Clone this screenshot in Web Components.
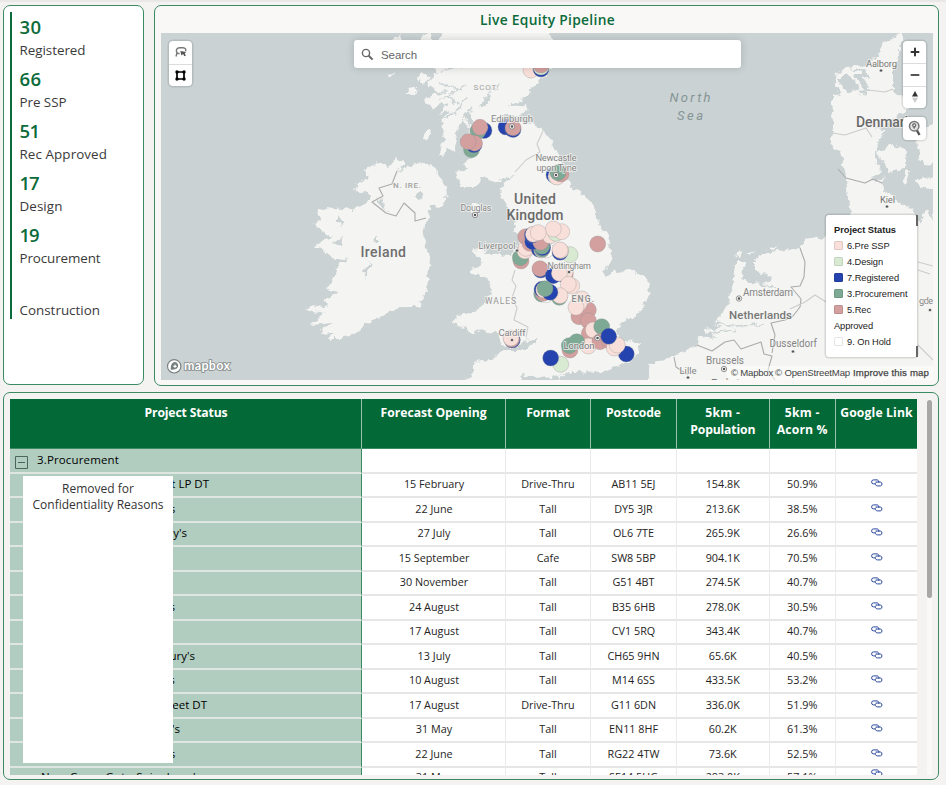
<!DOCTYPE html>
<html lang="en">
<head>
<meta charset="utf-8">
<title>Live Equity Pipeline</title>
<style>
html,body{margin:0;height:100%}
body{background:#f4f3f2;font-family:"Open Sans","Noto Sans",sans-serif;color:#252423;overflow:hidden}
</style>
</head>
<body>
<equity-dashboard></equity-dashboard>
<script>
/* Spreads or tightens letters so that each marked text takes the width in data-w. */
function fitTexts(root){
  root.querySelectorAll('[data-w]').forEach(e=>{
    const w=e.getBoundingClientRect().width,n=e.textContent.length;
    if(w&&n)e.style.letterSpacing=((+e.dataset.w-w)/n).toFixed(3)+'px';
  });
}

customElements.define('panel-card',class extends HTMLElement{
  constructor(){super();this.attachShadow({mode:'open'}).innerHTML=`
<style>:host{display:block;box-sizing:border-box;border:1px solid #3c8a62;border-radius:7px;background:var(--panel,#fff);overflow:hidden;min-width:0}</style><slot></slot>`}
});

customElements.define('stat-item',class extends HTMLElement{
  connectedCallback(){
    const r=this.attachShadow({mode:'open'});
    r.innerHTML=`<style>
:host{display:flex;flex-direction:column;height:52px;padding-left:7.5px;white-space:nowrap}
b{font-size:18.5px;line-height:30px;height:30px;font-weight:600;color:#0b6b3a}
span{font-size:13.4px;line-height:17px;color:#3a3a3a}
b,span{align-self:flex-start}
</style><b ${this.getAttribute('value')?`data-w="${this.getAttribute('vw')}"`:''}>${this.getAttribute('value')||''}</b><span data-w="${this.getAttribute('w')}">${this.getAttribute('label')}</span>`;
    fitTexts(r);
  }
});
customElements.define('stat-list',class extends HTMLElement{
  constructor(){super();this.attachShadow({mode:'open'}).innerHTML=`
<style>:host{display:block;box-sizing:border-box;margin:6px 6px 0;border-left:2px solid #0b6b3a;height:307px}</style><slot></slot>`}
});

customElements.define('map-button',class extends HTMLElement{
  constructor(){super();this.attachShadow({mode:'open'}).innerHTML=`
<style>:host{display:grid;place-items:center;width:23px;height:var(--h,22.5px);box-sizing:border-box}
:host(:not(:first-child)){border-top:1px solid #ddd}::slotted(svg){display:block}</style><slot></slot>`}
});
customElements.define('map-control',class extends HTMLElement{
  constructor(){super();this.attachShadow({mode:'open'}).innerHTML=`
<style>:host{position:absolute;background:#fff;border-radius:4px;box-shadow:0 0 0 1.5px rgba(0,0,0,.1)}</style><slot></slot>`}
});

customElements.define('map-legend',class extends HTMLElement{
  constructor(){super();
    const rows=[['#f9dfda','6.Pre SSP',42.5],['#d9ead3','4.Design',36],['#2443ae','7.Registered',52],['#7eaa95','3.Procurement',60.5],['#d3a09f','5.Rec',24],['','Approved',39],['#fff','9. On Hold',44]];
    this.attachShadow({mode:'open'}).innerHTML=`
<style>:host{position:absolute;left:665px;top:182px;width:91px;height:142px;box-sizing:border-box;padding:6.5px 8px;background:#fff;border-radius:3px;box-shadow:0 0 0 1.5px rgba(0,0,0,.12);font:9.3px "Liberation Sans",Arial,sans-serif;color:#222;white-space:nowrap}
div{display:flex;align-items:center;height:16px}
i{width:9px;height:9px;margin-right:4px;box-sizing:border-box;border:1px solid rgba(0,0,0,.1);border-radius:1.5px}
.a,.z{position:absolute;left:90px;width:2px;height:11px;background:#666}.a{top:0}.z{bottom:0}
</style><div><b data-w="62">Project Status</b></div>${rows.map(r=>`<div>${r[0]?`<i style="background:${r[0]}"></i>`:''}<span data-w="${r[2]}">${r[1]}</span></div>`).join('')}<span class="a"></span><span class="z"></span>`}
  connectedCallback(){fitTexts(this.shadowRoot)}
});

customElements.define('pipeline-map',class extends HTMLElement{
  constructor(){super();
    const C={p:'#f9dfda',r:'#d3a09f',b:'#2443ae',g:'#7eaa95',l:'#d9ead3',w:'#fff'};
    /* site markers in drawing order: colour key, x, y */
    const dots=`p531,70 b541,69 l541,67 r541,65 b484,130.5 g478,131 r480,127.3 g471.5,149.5 b474,144.8 r474.5,143.2 r468.2,141.7
b506,127 b513,129.5 r513,127.8 b554,175 w556,176.5 p557,177 r561,174 g558,172.7`.split(/\s+/).map(s=>[s[0],...s.slice(1).split(',').map(Number)]);
    const dense=`r303,213 g301,203 p315,183 p318,175 r317,140 r330,160 w378,180 b358,178 p365,180 g366,178 b368,173 g366,169 b338,155 r362,157 p390,137 l408,130 p425,125 p400,117 b337,135 p340,133 p355,128 r533,162 l450,194 b420,187 p422,182 p420,180 b362,240 r360,236 b400,257 r436,252 b428,252 p435,247 p418,250 p455,288 p445,283 g365,312 w378,314 r370,310 g418,322 p420,317 b366,298 p371,300 b390,307 g375,296 r477,380 r505,360 r505,392 p486,327 p478,340 p468,352 r508,430 p520,420 g545,410 p505,468 r540,455 r568,452 b619,492 p583,474 p592,465 b566,439 r450,480 g448,467 g470,455 l422,523 b392,504 b277,450 r275,448 p273,444`.split(/\s+/).map(s=>{const [x,y]=s.slice(1).split(',').map(Number);return[s[0],420+x/3,190+y/3]});
    const circ=a=>a.map(d=>`<circle cx="${d[1].toFixed(1)}" cy="${d[2].toFixed(1)}" r="8" fill="${C[d[0]]}"/>`).join('');
    /* place labels: text, left, baseline, width, size, weight, colour */
    const labels=[['Edinburgh',491,122,42,9.5,400,'#8b8b8b'],['Newcastle',535.5,160.5,41,9.5,400,'#858585'],['upon Tyne',536.5,171,40,9.5,400,'#858585'],['SCOT.',473.5,89.5,25,8,400,'#a2a2a2'],['N. IRE.',393,188,28,8,500,'#a2a2a2'],['Douglas',460.5,211,31,9,400,'#858585'],['Liverpool',478.5,248.5,37,9,400,'#858585'],['Nottingham',547.5,268.5,43.5,9,400,'#858585'],['WALES',485,304,31,8.5,400,'#999'],['ENG.',571.5,301.5,22.5,8.5,500,'#8a8a8a'],['Cardiff',498.5,335.5,27,9.5,400,'#858585'],['London',563.5,348.5,31,9.5,400,'#777'],['Ireland',360.5,256.5,45.5,14,500,'#6e6e6e'],['United',514,204,42,14,500,'#6a6a6a'],['Kingdom',506.5,220,57,14,500,'#6a6a6a'],['Aalborg',866,66.5,31,9.5,400,'#777'],['Denmark',856,127,56,14,500,'#6a6a6a'],['Kiel',880,203,15,9.5,400,'#777'],['Amsterdam',743,296,50,10,400,'#858585'],['Netherlands',729,318.5,63,11.5,500,'#777'],['Dusseldorf',769.5,347,47.5,10,400,'#858585'],['Brussels',706,363.5,38,10,400,'#858585'],['Lille',679.5,374,17,9.5,400,'#858585'],['gde',919,303.5,14,9.5,400,'#858585'],['Belgium',711,387.5,46,12,500,'#777']];
    this.attachShadow({mode:'open'}).innerHTML=`
<style>
:host{display:block;position:relative;width:772px;height:347px;overflow:hidden;background:#cad2d3}
.base{display:block}
.base text{font-family:Roboto,"Open Sans",sans-serif;paint-order:stroke;stroke:#f4f4f2;stroke-opacity:.75;stroke-width:1.8px;stroke-linejoin:round}
.base .sea{font-style:italic;stroke:none}
.search{position:absolute;left:193px;top:7px;width:387px;height:28px;box-sizing:border-box;padding:0 7px;background:#fff;border-radius:3px;box-shadow:0 0 7px 1px rgba(0,0,0,.13);display:flex;align-items:center;gap:7px;font:11.5px "Liberation Sans",Arial,sans-serif;color:#666}
.search span{padding-top:2px}
.attr{position:absolute;right:0;bottom:0;height:14px;box-sizing:border-box;width:206px;padding:0 4px;display:flex;gap:2px;background:rgba(255,255,255,.5);font:9.6px/14px "Liberation Sans",Arial,sans-serif;color:#444;white-space:nowrap}
.attr :last-child{margin-left:auto;-webkit-text-stroke:.25px #444}
.logo{position:absolute;left:5px;bottom:5px;display:flex;align-items:center}
</style>
<svg class="base" width="772" height="347" viewBox="161 33 772 347">
<defs><filter id="rough" x="161" y="33" width="772" height="347" filterUnits="userSpaceOnUse"><feTurbulence type="fractalNoise" baseFrequency=".16" numOctaves="3" seed="4"/><feDisplacementMap in="SourceGraphic" scale="8" xChannelSelector="R" yChannelSelector="G"/></filter></defs>
<g filter="url(#rough)"><g fill="#f4f4f2">
<path d="M440 20L545 20L552 40L556 52L551 68L543 78L532 88L527 97L512 103L510 106L527 105L528 110L520 115L505 116L495 118L503 122L520 122L533 124L544 131L553 143L557 155L567 173L570 185L585 196L595 207L598 223L607 235L611 252L610 265L603 270L605 276L613 272L633 271L648 280L650 293L642 310L633 318L623 322L614 332L625 340L642 344L638 353L628 363L613 367L603 373L570 372L553 377L533 378L523 374L517 390L460 390L466 378L474 371L474 362L490 360L503 350L528 350L538 337L527 341L517 348L503 345L497 333L487 332L480 330L470 333L463 327L452 322L457 317L473 313L487 303L492 290L488 277L477 276L470 272L478 265L483 260L472 253L487 253L510 255L517 250L520 240L515 230L517 220L510 210L503 200L501 192L504 182L518 174L493 183L485 175L475 187L460 187L456 173L467 170L463 163L472 157L470 147L462 137L471 130L463 120L458 124L457 133L452 143L447 150L443 157L439 155L443 140L444 127L440 120L450 110L440 113L448 103L433 107L423 100L438 93L427 83L437 73L432 66L440 55Z"/>
<path d="M355 190L358 183L368 178L365 168L378 163L388 167L397 157L405 163L397 172L415 163L433 165L437 173L446 187L447 197L440 207L430 205L428 217L423 233L430 257L427 290L422 300L420 307L402 307L388 313L368 323L355 333L338 339L327 339L335 332L318 333L332 323L310 325L325 313L307 310L310 305L327 307L323 300L340 292L324 289L333 282L338 265L349 260L332 257L316 245L332 238L318 227L313 223L322 220L317 212L325 207L352 210L368 202L372 195Z"/>
<path d="M902 30L893 38L883 42L877 55L867 65L847 67L837 73L835 85L843 96L832 92L832 107L834 123L830 143L840 153L845 170L847 187L848 200L852 215L836 225L826 237L803 240L800 248L790 249L763 253L755 258L755 270L763 278L750 284L742 278L744 262L735 262L733 283L727 307L713 323L722 328L702 330L718 338L698 336L697 345L680 353L673 357L650 363L645 390L940 390L940 230L926 210L920 222L913 210L897 200L884 191L883 173L875 160L877 147L885 130L893 119L907 110L912 98L900 97L893 90L893 73L900 50Z"/>
<path d="M877 153L893 144L906 150L905 168L890 172ZM914 128L940 124L940 164L921 163L918 146ZM914 179L940 177L940 191L921 187ZM907 169L911 171L904 187L902 184ZM935 210l6 0 0 20-8 0ZM450 135l8 2-4 14-6-3ZM427 130l5 2-6 10-4-2ZM422 72l8 4-6 9-7-5ZM412 87l8 2-9 7-6-1ZM389 75l6-3-4 6ZM392 40l8-4 3 5-6 3ZM420 37l10-4 4 12-8 10-6-6ZM472 203l9 2-5 9-5-3ZM470 252l10-6 8 5-9 5ZM558 374l9 2-8 4ZM736 255l6-4-2 7ZM745 253l12-3-7 4ZM768 248l12-3-8 5Z"/>
</g><g fill="#cad2d3"><path d="M838 78l10-3 6 4 5 8-9 6-7-5ZM853 74l10 0 2 8 5 9-6 0-5-9ZM848 67l18 4 4 9-9-7ZM857 91l10 5-2-6ZM757 276l8-4 7 7-10 8-5-5ZM415 193l7-1 2 6-6 2ZM375 197l7 3 5 11-4-2ZM373 240l4-4 0 8ZM362 272l5-7 4-2-6 14ZM480 106l10-12 2 2-8 12ZM874 128l15-4 2 7-9-1ZM870 178l13-6 2 4-8 6ZM338 216l4 6 0 4-4-4ZM333 245l10-9-2 8ZM465 112l4 0 3 12-3 2Z"/></g>
<g fill="none" stroke="#cad2d3" stroke-width="1.4"><path d="M440 100L465 85M440 72L475 60M438 83L463 90M463 62L484 41M460 125L472 107M470 130L483 133M485 98L500 83M448 95L459 105M446 60L462 68M441 44L457 52M444 118L456 112L466 98M430 95L446 92M708 322L735 326L765 325M704 334L735 330M760 286L775 287"/></g>
</g>
<g fill="none" stroke="#ababab" stroke-width="1.1" stroke-linejoin="round"><path d="M397 171L392 184L379 188L383 196L372 202L386 213L396 216L404 203L415 213L415 221L426 218"/><path d="M697 345L712 351L725 342L734 340L741 349L761 342L764 354L772 356L768 370L775 380M800 248L805 262L804 277L800 286L791 287L801 299L800 307L793 316L785 320L771 323L775 335L772 353"/><path d="M838 169L846 178L865 183L873 179L882 183M674 357L676 367L688 375"/><g stroke="#ccc"><path d="M515 270L512 280L516 286L512 298L517 308L514 320L528 327L526 337M543 131L537 144L540 152L526 160L515 172M832 133L845 135L866 128L872 137M868 90L885 92L893 89M790 309L805 302L815 295L826 302M918 262L933 266M918 345L933 360M918 270L930 274"/></g></g>
<g stroke="#8b8b8b" stroke-opacity=".4" stroke-width=".8">${circ(dots)}${circ(dense)}</g>
<g>${labels.map(l=>`<text x="${l[1]}" y="${l[2]}" textLength="${l[3]}" font-size="${l[4]}" font-weight="${l[5]}" fill="${l[6]}">${l[0]}</text>`).join('')}
<text class="sea" x="669.5" y="102" textLength="41" font-size="13" fill="#869596">North</text><text class="sea" x="677" y="120" textLength="26" font-size="13" fill="#869596">Sea</text></g>
<g fill="#555" stroke="#fff" stroke-width="1">${[[512,126.5],[556,175],[475,215],[597.5,338],[739,298.5],[724,369]].map(p=>`<circle cx="${p[0]}" cy="${p[1]}" r="2.7" stroke="#777" fill="#fff" stroke-width=".8"/><circle cx="${p[0]}" cy="${p[1]}" r="1.3" stroke="none"/>`).join('')}${[[517,250.5],[569,272],[512,340],[881,70.5],[887,206.5],[793,351.5],[688,377.5],[930,310]].map(p=>`<circle cx="${p[0]}" cy="${p[1]}" r="1.6" stroke-width=".5"/>`).join('')}</g>
</svg>
<map-control style="left:8px;top:8px"><map-button><svg width="12" height="12" viewBox="0 0 12 12"><path d="M2.4 7C.8 5.5 .7 2 4.5 1.7H8C10.5 1.8 11.3 3.6 10.6 5.3M1 10.5L1.8 7.5h2.8" fill="none" stroke="#777" stroke-width="1.4"/><path d="M5.3 5l6 .9-1.6 1.4 1.2 2.3-1.6.7-1.2-2.2L6.4 9.4Z" fill="#555"/></svg></map-button><map-button><svg width="11" height="11" viewBox="0 0 11 11"><path d="M2 2h7v7H2Z" fill="none" stroke="#000" stroke-width="1.7"/><circle cx="2" cy="2" r="1.7"/><circle cx="9" cy="2" r="1.7"/><circle cx="2" cy="9" r="1.7"/><circle cx="9" cy="9" r="1.7"/></svg></map-button></map-control>
<div class="search"><svg width="13" height="13" viewBox="0 0 13 13" fill="none" stroke="#666"><circle cx="5" cy="5" r="3.6" stroke-width="1.4"/><path d="M7.7 7.7L11.6 11.6" stroke-width="2"/></svg><span data-w="36">Search</span></div>
<map-control style="left:742px;top:8px;--h:22.4px"><map-button><svg width="10" height="10"><path d="M5 1.5v7M1.5 5h7" stroke="#333" stroke-width="2" stroke-linecap="round"/></svg></map-button><map-button><svg width="10" height="10"><path d="M1.5 5h7" stroke="#555" stroke-width="2.2" stroke-linecap="round"/></svg></map-button><map-button><svg width="8" height="14"><path d="M1 6.5L4 1l3 5.5Z" fill="#333"/><path d="M1 7.7L4 13l3-5.3Z" fill="#ccc"/></svg></map-button></map-control>
<map-control style="left:742px;top:84px"><map-button><svg width="14" height="17" viewBox="0 0 14 17"><circle cx="6.2" cy="6.2" r="4.7" fill="#e4e4e4" stroke="#777" stroke-width="1.5"/><path d="M9 10.5L11.5 15" stroke="#555" stroke-width="2.4"/><path d="M6.2 9.2L4.4 6.5A2.2 2.2 0 1 1 8 6.5Z" fill="#777"/><circle cx="6.2" cy="5.2" r=".8" fill="#fff"/></svg></map-button></map-control>
<div class="attr"><span data-w="42">© Mapbox</span><span data-w="75">© OpenStreetMap</span><span data-w="76">Improve this map</span></div>
<map-legend></map-legend>
<div class="logo"><svg width="68" height="17" viewBox="0 0 68 17"><circle cx="8.2" cy="8.3" r="6.7" fill="#fff" stroke="#7c8181" stroke-width="1.2"/><path d="M4.7 11.7C4.8 6.7 6 4.2 9 4.1A3.5 3.5 0 0 1 12 8.8C10.9 11.3 8.6 11.9 4.7 11.7Z" fill="#777e7e"/><path d="M9 6l.7 1.5 1.5.7-1.5.7L9 10.4l-.7-1.5-1.5-.7 1.5-.7Z" fill="#fff"/><text x="18" y="11.5" textLength="46" font-family="Lato" font-weight="700" font-size="12.5" fill="#fff" stroke="#858b8b" stroke-width="1.7" paint-order="stroke">mapbox</text></svg></div>`}
  connectedCallback(){fitTexts(this.shadowRoot)}
});

customElements.define('link-icon',class extends HTMLElement{
  constructor(){super();this.attachShadow({mode:'open'}).innerHTML=`<style>:host{display:block;height:8px;margin-bottom:2px}svg{display:block}</style>
<svg width="12" height="8" viewBox="0 0 12 8" fill="none" stroke="#2a479c" stroke-width="1"><path d="M4 4.9H2.6A2 2 0 0 1 2.6.9H6A2 2 0 0 1 7.8 3.6M5.2 3.5A2 1.9 0 0 0 6.6 6.9H9.4A2 2 0 0 0 9.4 3H7.4M4.6 3h3.2"/></svg>`}
});

customElements.define('pipeline-table',class extends HTMLElement{
  constructor(){super();
    const rows=[['t LP DT',209,'15 February','Drive-Thru','AB11 5EJ','154.8K','50.9%'],['s',175.3,'22 June','Tall','DY5 3JR','213.6K','38.5%'],["y's",187,'27 July','Tall','OL6 7TE','265.9K','26.6%'],['',0,'15 September','Cafe','SW8 5BP','904.1K','70.5%'],['',0,'30 November','Tall','G51 4BT','274.5K','40.7%'],['s',175,'24 August','Tall','B35 6HB','278.0K','30.5%'],['',0,'17 August','Tall','CV1 5RQ','343.4K','40.7%'],["ury's",195,'13 July','Tall','CH65 9HN','65.6K','40.5%'],['s',174.7,'10 August','Tall','M14 6SS','433.5K','53.2%'],['eet DT',207,'17 August','Drive-Thru','G11 6DN','336.0K','51.9%'],["'s",180,'31 May','Tall','EN11 8HF','60.2K','61.3%'],['s',175.3,'22 June','Tall','RG22 4TW','73.6K','52.5%'],["New Cross Gate Sainsbury's",202,'31 May','Tall','SE14 5UG','283.0K','57.1%']];
    const heads=[['Project Status',83],['Forecast Opening',106],['Format',43.5],['Postcode',55],['5km -|Population',35,65],['5km -|Acorn %',35,51],['Google Link',72.5]];
    this.attachShadow({mode:'open'}).innerHTML=`
<style>
:host{display:block;position:relative;height:386px;box-sizing:border-box;padding:6px 0 0 6px}
.view{width:907px;height:376px;overflow:hidden;background:#fff}
.row{display:grid;grid-template-columns:352px 144px 85px 86px 92.5px 66.5px 81px;height:24.5px}
.row>div{box-sizing:border-box;border-right:1px solid #ebebeb;border-bottom:2px solid #e6e6e6;display:flex;align-items:center;justify-content:center;font-size:10.8px;line-height:14px;white-space:nowrap;min-width:0;padding:0 0 1px}
.row>div:first-child{background:#b0cdbf;border-right:1px solid #3c8a62;border-bottom-color:#dfe5e1;color:#000;justify-content:flex-start;font-size:11.5px}
.row>div:nth-child(2){padding-left:1px}
.row>div:last-child{border-right:0}
.row.head{height:50px}.row.head>div{background:#036936;color:#fff;border-bottom:1px solid #3c8a62;border-right-color:#9bc0ab;flex-direction:column;justify-content:flex-start;padding:5px 0 0;font-weight:700;font-size:12.2px;line-height:17px}
.row.head>div:last-child{border-right:0}
.row.head>div:first-child{align-items:center;padding-left:1px}
.row:last-child>div{align-items:flex-start;line-height:12px;padding-top:3px}
.row:last-child>div:last-child{padding-top:1px}
.frag{text-align:right;flex:none}
.tog{margin:6px 9px 0 5px}
.mask{position:absolute;left:19px;top:82.5px;width:150px;height:287px;background:#fff;text-align:center;font-size:12px;line-height:16px;color:#333;padding-top:5.5px;box-sizing:border-box;white-space:nowrap}
.bar{position:absolute;right:6px;top:6px;width:5px;height:376px;background:#faf9f8;border-radius:3px}.bar i{display:block;width:5px;height:198px;margin-top:1px;background:#a9a7a6;border-radius:2.5px}
</style>
<div class="view"><div class="row head">${heads.map(h=>`<div>${h[0].split('|').map((t,i)=>`<span data-w="${h[i+1]}">${t}</span>`).join('')}</div>`).join('')}</div>
<div class="row"><div><svg class="tog" width="13" height="13"><path d="M.5.5h12v12H.5ZM3 6.5h7" fill="none" stroke="#4c6459"/></svg><span data-w="82">3.Procurement</span></div>${'<div></div>'.repeat(6)}</div>
${rows.map(r=>`<div class="row"><div><span class="frag" style="width:${Math.max(0,r[1]-10)}px">${r[0].length>8?`<span data-w="161">${r[0]}</span>`:r[0]}</span></div>${r.slice(2).map(t=>`<div><span>${t}</span></div>`).join('')}<div><link-icon></link-icon></div></div>`).join('')}</div>
<div class="mask"><span data-w="72">Removed for</span><br><span data-w="131">Confidentiality Reasons</span></div>
<div class="bar"><i></i></div>`}
  connectedCallback(){fitTexts(this.shadowRoot)}
});

customElements.define('equity-dashboard',class extends HTMLElement{
  connectedCallback(){
    const r=this.attachShadow({mode:'open'});
    r.innerHTML=`
<style>
:host{display:grid;width:946px;height:785px;box-sizing:border-box;padding:5px 7px 5px 3px;grid-template-columns:141px 785px;grid-template-rows:381px 388px;gap:6px 10px;box-shadow:inset 0 2px 1px #e9e8e7}
.kpi{height:380px}.map{--panel:#f9f8f7}.grid{grid-column:1/3;--panel:#f4f3f2}
h1{margin:0;height:27px;line-height:28px;text-align:center;font-size:13.8px;font-weight:600;color:#0b6b3a;padding-left:2px}
pipeline-map{margin-left:6px}
</style>
<panel-card class="kpi"><stat-list>
<stat-item value="30" vw="22" label="Registered" w="66"></stat-item>
<stat-item value="66" vw="22" label="Pre SSP" w="47"></stat-item>
<stat-item value="51" vw="20" label="Rec Approved" w="87.5"></stat-item>
<stat-item value="17" vw="19" label="Design" w="43"></stat-item>
<stat-item value="19" vw="19" label="Procurement" w="81"></stat-item>
<stat-item label="Construction" w="80.5"></stat-item>
</stat-list></panel-card>
<panel-card class="map"><h1><span data-w="135">Live Equity Pipeline</span></h1><pipeline-map></pipeline-map></panel-card>
<panel-card class="grid"><pipeline-table></pipeline-table></panel-card>`;
    fitTexts(r);
  }
});
</script>
</body>
</html>
